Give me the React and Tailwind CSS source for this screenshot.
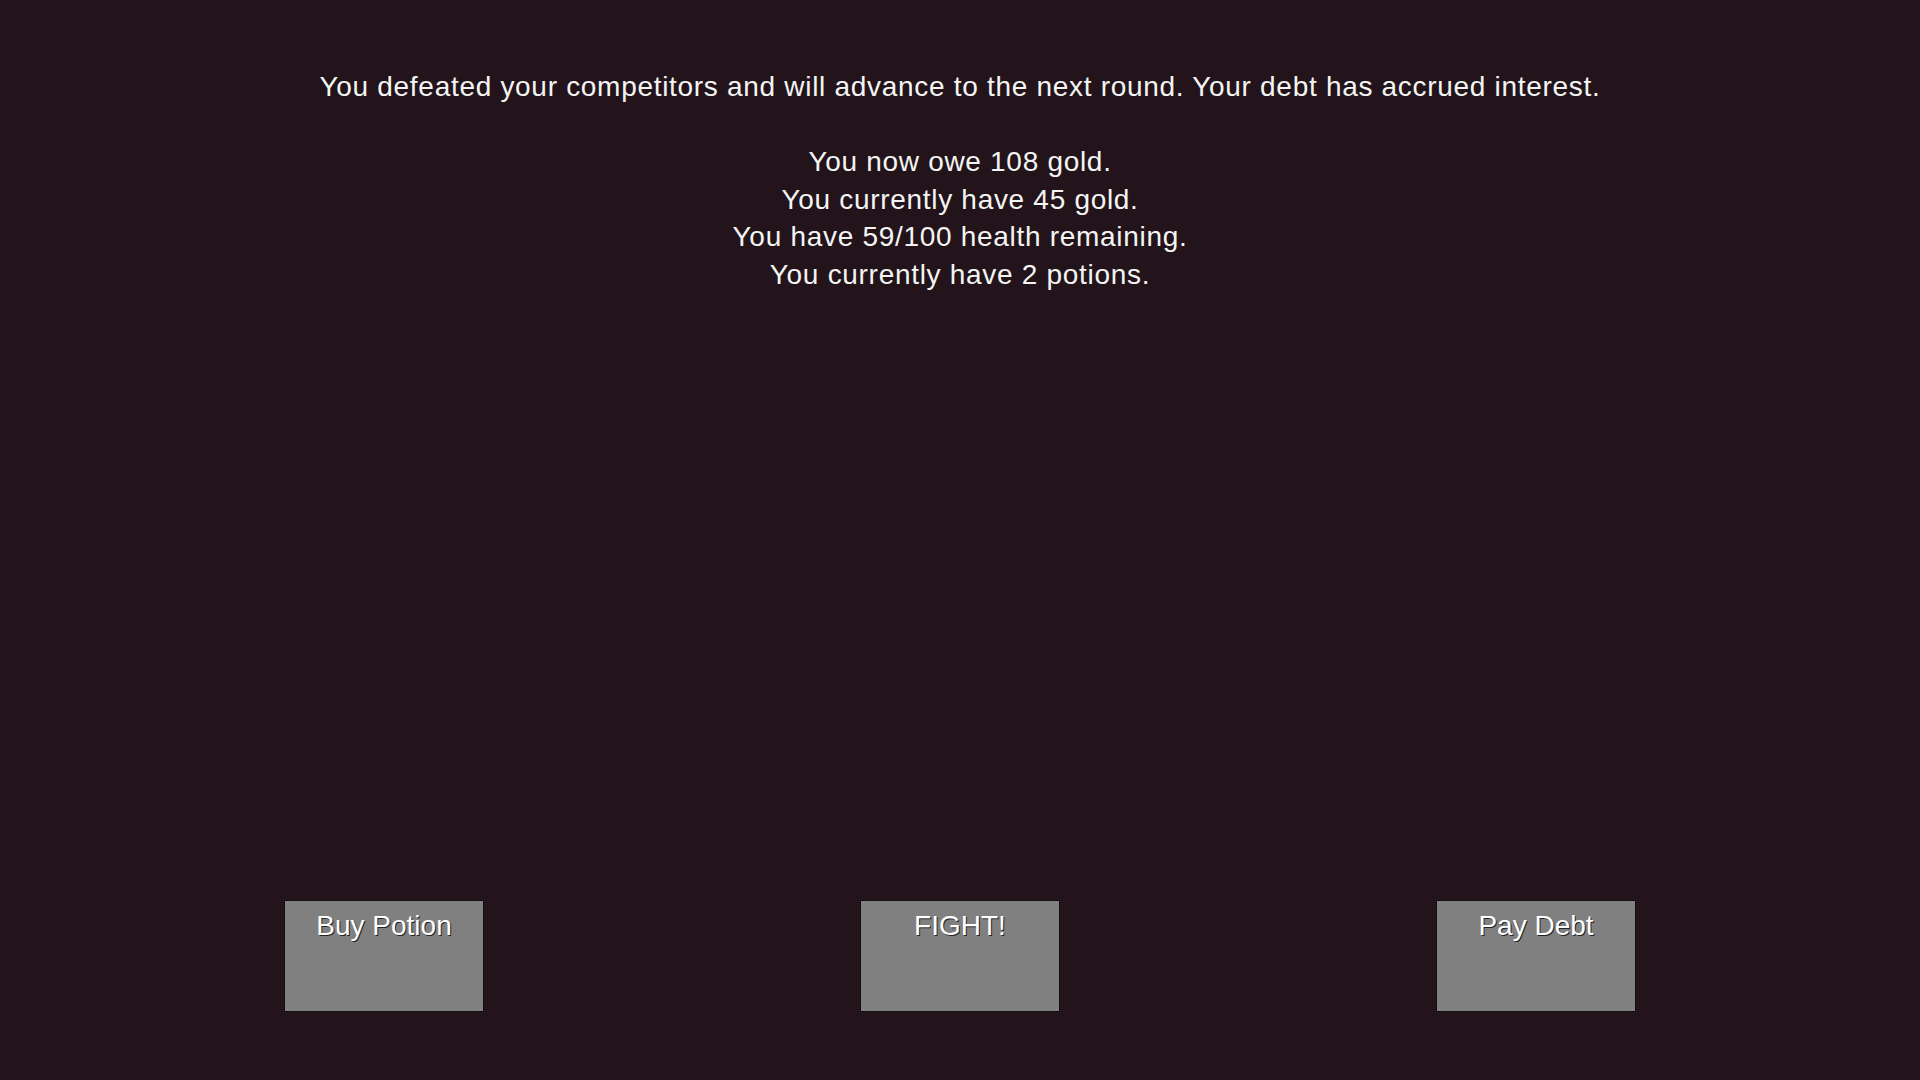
import React from 'react';

const stats = [
  'You now owe 108 gold.',
  'You currently have 45 gold.',
  'You have 59/100 health remaining.',
  'You currently have 2 potions.',
];

function GameButton({ label }) {
  return (
    <button className="w-[200px] h-[112px] bg-[#808080] border border-[#111] flex justify-center pt-[6px] text-white text-[28px] leading-[37px] [text-shadow:1px_1px_0_#222]">
      {label}
    </button>
  );
}

export default function App() {
  return (
    <div className="flex flex-col h-screen bg-[#22141a] text-[#f4f4f4] font-['Liberation_Sans',sans-serif]">
      <div className="flex flex-col items-center pt-[68px] text-[28px] leading-[37.5px] tracking-[0.7px]">
        <p>You defeated your competitors and will advance to the next round. Your debt has accrued interest.</p>
        <p>&nbsp;</p>
        {stats.map((s) => (
          <p key={s}>{s}</p>
        ))}
      </div>
      <div className="mt-auto flex justify-between px-[284px] pb-[68px]">
        <GameButton label="Buy Potion" />
        <GameButton label="FIGHT!" />
        <GameButton label="Pay Debt" />
      </div>
    </div>
  );
}
